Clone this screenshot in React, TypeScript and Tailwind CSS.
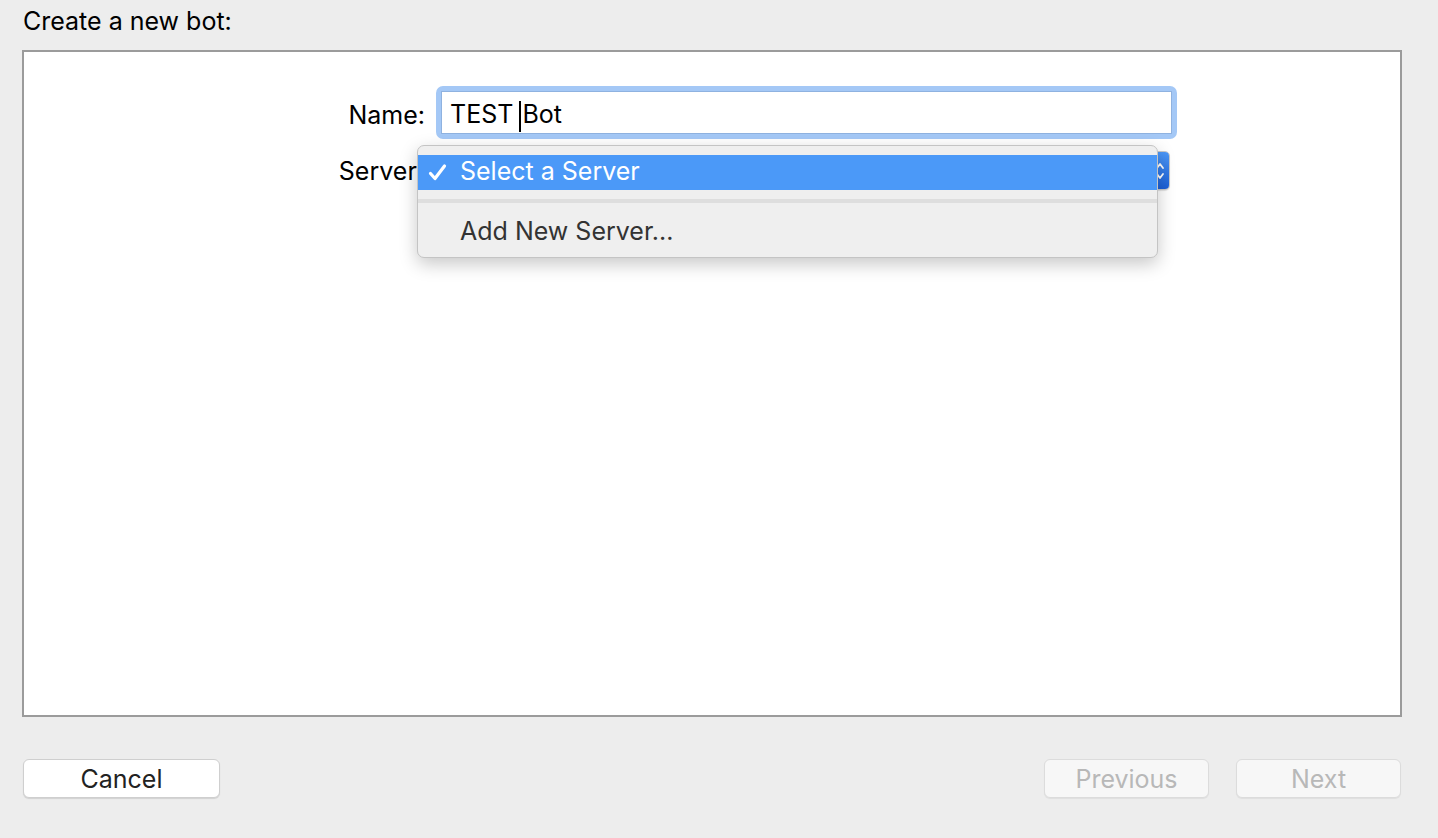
import React from "react";

const Chevrons = () => (
    <svg width="10" height="22" viewBox="0 0 10 22" fill="none" stroke="white" strokeWidth="1.8" strokeLinecap="round" strokeLinejoin="round">
        <path d="M2 8 L5 4 L8 8" />
        <path d="M2 14 L5 18 L8 14" />
    </svg>
);

const Check = () => (
    <svg width="19" height="19" viewBox="0 0 19 19" fill="none" stroke="white" strokeWidth="3.2" strokeLinecap="round" strokeLinejoin="round">
        <path d="M2.5 10.5 L7 15.5 L16.5 3" />
    </svg>
);

const App: React.FC = () => {
    return (
        <div className="min-h-screen w-full bg-[#ededed] font-['Inter','Liberation_Sans',sans-serif] text-black">
            {/* TITLE */}
            <div className="pl-[23px] pt-[5px] h-[50px] text-[25px] leading-[32px]">Create a new bot:</div>

            {/* PANEL */}
            <div className="relative ml-[22px] w-[1380px] h-[667px] border-2 border-[#9b9b9b] bg-white">
                <div className="flex flex-col pt-[34px]">
                    {/* NAME ROW */}
                    <div className="flex items-center">
                        <div className="w-[401px] text-right text-[25px] leading-[32px] pt-[4px]">Name:</div>
                        <div className="ml-[11px] w-[741px] h-[53px] rounded-[7px] bg-[#a4c8f6] p-[5px]">
                            <div className="h-full w-full bg-white border border-[#8fb2e0] pl-[8px] text-[25px] leading-[44px] whitespace-pre">
                                TEST <span className="inline-block w-[2px] h-[31px] bg-black align-middle -ml-[1px] mr-[1px]"></span>Bot
                            </div>
                        </div>
                    </div>

                    {/* SERVER ROW */}
                    <div className="flex items-center mt-[12px]">
                        <div className="w-[400px] text-right text-[25px] leading-[32px]">Server:</div>
                        <div className="ml-[13px] w-[733px] h-[39px] flex rounded-[5px] bg-white border border-[#c9c9c9] shadow-[0_1px_1px_rgba(0,0,0,0.12)] overflow-hidden">
                            <div className="flex-1"></div>
                            <div className="w-[32px] h-full bg-gradient-to-b from-[#4c97f7] to-[#1c5fd6] flex items-center justify-end pr-[4px]">
                                <Chevrons />
                            </div>
                        </div>
                    </div>
                </div>

                {/* POPUP MENU */}
                <div className="absolute left-[393px] top-[93px] w-[741px] rounded-[7px] bg-[#efefef] border border-[#c4c4c4] shadow-[0_6px_18px_rgba(0,0,0,0.22)] pt-[9px]">
                    <div className="h-[35px] bg-[#4b99f8] flex items-center pb-[2px] text-white text-[25px]">
                        <span className="w-[42px] pl-[10px] pt-[2px] flex items-center"><Check /></span>
                        <span>Select a Server</span>
                    </div>
                    <div className="mt-[9px] h-[4px] bg-[#dedede]"></div>
                    <div className="h-[54px] flex items-center pl-[42px] pt-[3px] text-[#333333] text-[25px]">Add New Server...</div>
                </div>
            </div>

            {/* BUTTONS */}
            <div className="mt-[42px] ml-[23px] w-[1378px] flex items-center">
                <button className="w-[197px] h-[39px] rounded-[6px] bg-white border border-[#cfcfcf] shadow-[0_1px_1px_rgba(0,0,0,0.12)] text-[25px] leading-[32px] text-[#222222]">Cancel</button>
                <div className="flex-1"></div>
                <button className="w-[165px] h-[39px] rounded-[6px] bg-[#f7f7f7] border border-[#dcdcdc] shadow-[0_1px_1px_rgba(0,0,0,0.06)] text-[25px] leading-[32px] text-[#b8b8b8]">Previous</button>
                <button className="ml-[27px] w-[165px] h-[39px] rounded-[6px] bg-[#f7f7f7] border border-[#dcdcdc] shadow-[0_1px_1px_rgba(0,0,0,0.06)] text-[25px] leading-[32px] text-[#b8b8b8]">Next</button>
            </div>
        </div>
    );
};

export default App;
